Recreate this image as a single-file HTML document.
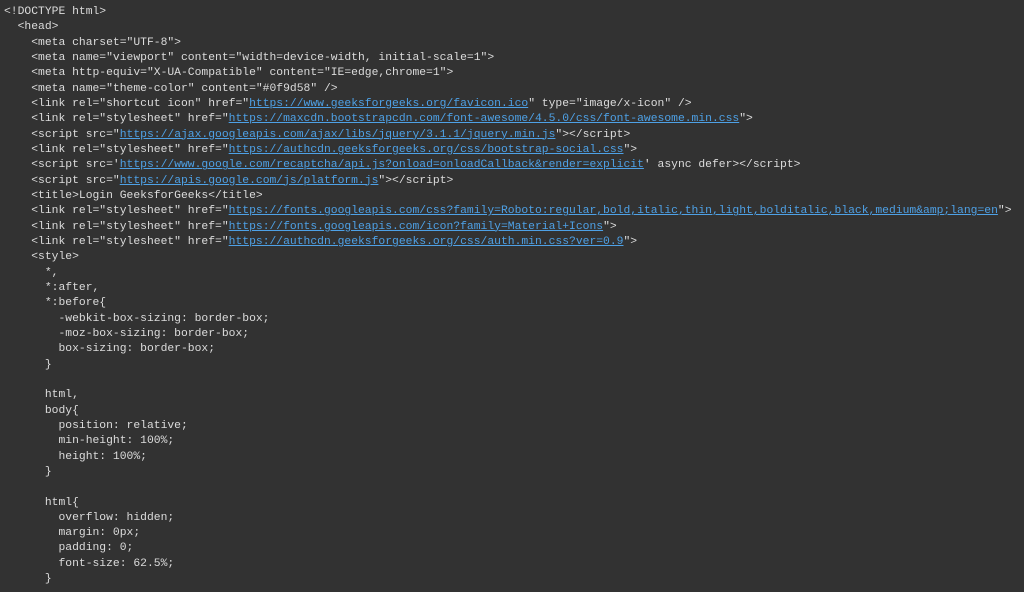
<!DOCTYPE html>
<html><head><meta charset="utf-8"><style>
html,body{margin:0;padding:0;background:#323232;width:1024px;height:592px;overflow:hidden}
pre{margin:0;padding:5px 0 0 4px;font-family:"Liberation Mono",monospace;font-size:11.35px;line-height:15.33px;color:#dcdcdc}
u{color:#4ea1e6;text-decoration:underline}
</style></head><body><pre>&lt;!DOCTYPE html&gt;
  &lt;head&gt;
    &lt;meta charset="UTF-8"&gt;
    &lt;meta name="viewport" content="width=device-width, initial-scale=1"&gt;
    &lt;meta http-equiv="X-UA-Compatible" content="IE=edge,chrome=1"&gt;
    &lt;meta name="theme-color" content="#0f9d58" /&gt;
    &lt;link rel="shortcut icon" href="<u>https://www.geeksforgeeks.org/favicon.ico</u>" type="image/x-icon" /&gt;
    &lt;link rel="stylesheet" href="<u>https://maxcdn.bootstrapcdn.com/font-awesome/4.5.0/css/font-awesome.min.css</u>"&gt;
    &lt;script src="<u>https://ajax.googleapis.com/ajax/libs/jquery/3.1.1/jquery.min.js</u>"&gt;&lt;/script&gt;
    &lt;link rel="stylesheet" href="<u>https://authcdn.geeksforgeeks.org/css/bootstrap-social.css</u>"&gt;
    &lt;script src='<u>https://www.google.com/recaptcha/api.js?onload=onloadCallback&amp;render=explicit</u>' async defer&gt;&lt;/script&gt;
    &lt;script src="<u>https://apis.google.com/js/platform.js</u>"&gt;&lt;/script&gt;
    &lt;title&gt;Login GeeksforGeeks&lt;/title&gt;
    &lt;link rel="stylesheet" href="<u>https://fonts.googleapis.com/css?family=Roboto:regular,bold,italic,thin,light,bolditalic,black,medium&amp;amp;lang=en</u>"&gt;
    &lt;link rel="stylesheet" href="<u>https://fonts.googleapis.com/icon?family=Material+Icons</u>"&gt;
    &lt;link rel="stylesheet" href="<u>https://authcdn.geeksforgeeks.org/css/auth.min.css?ver=0.9</u>"&gt;
    &lt;style&gt;
      *,
      *:after,
      *:before{
        -webkit-box-sizing: border-box;
        -moz-box-sizing: border-box;
        box-sizing: border-box;
      }

      html,
      body{
        position: relative;
        min-height: 100%;
        height: 100%;
      }

      html{
        overflow: hidden;
        margin: 0px;
        padding: 0;
        font-size: 62.5%;
      }</pre></body></html>
